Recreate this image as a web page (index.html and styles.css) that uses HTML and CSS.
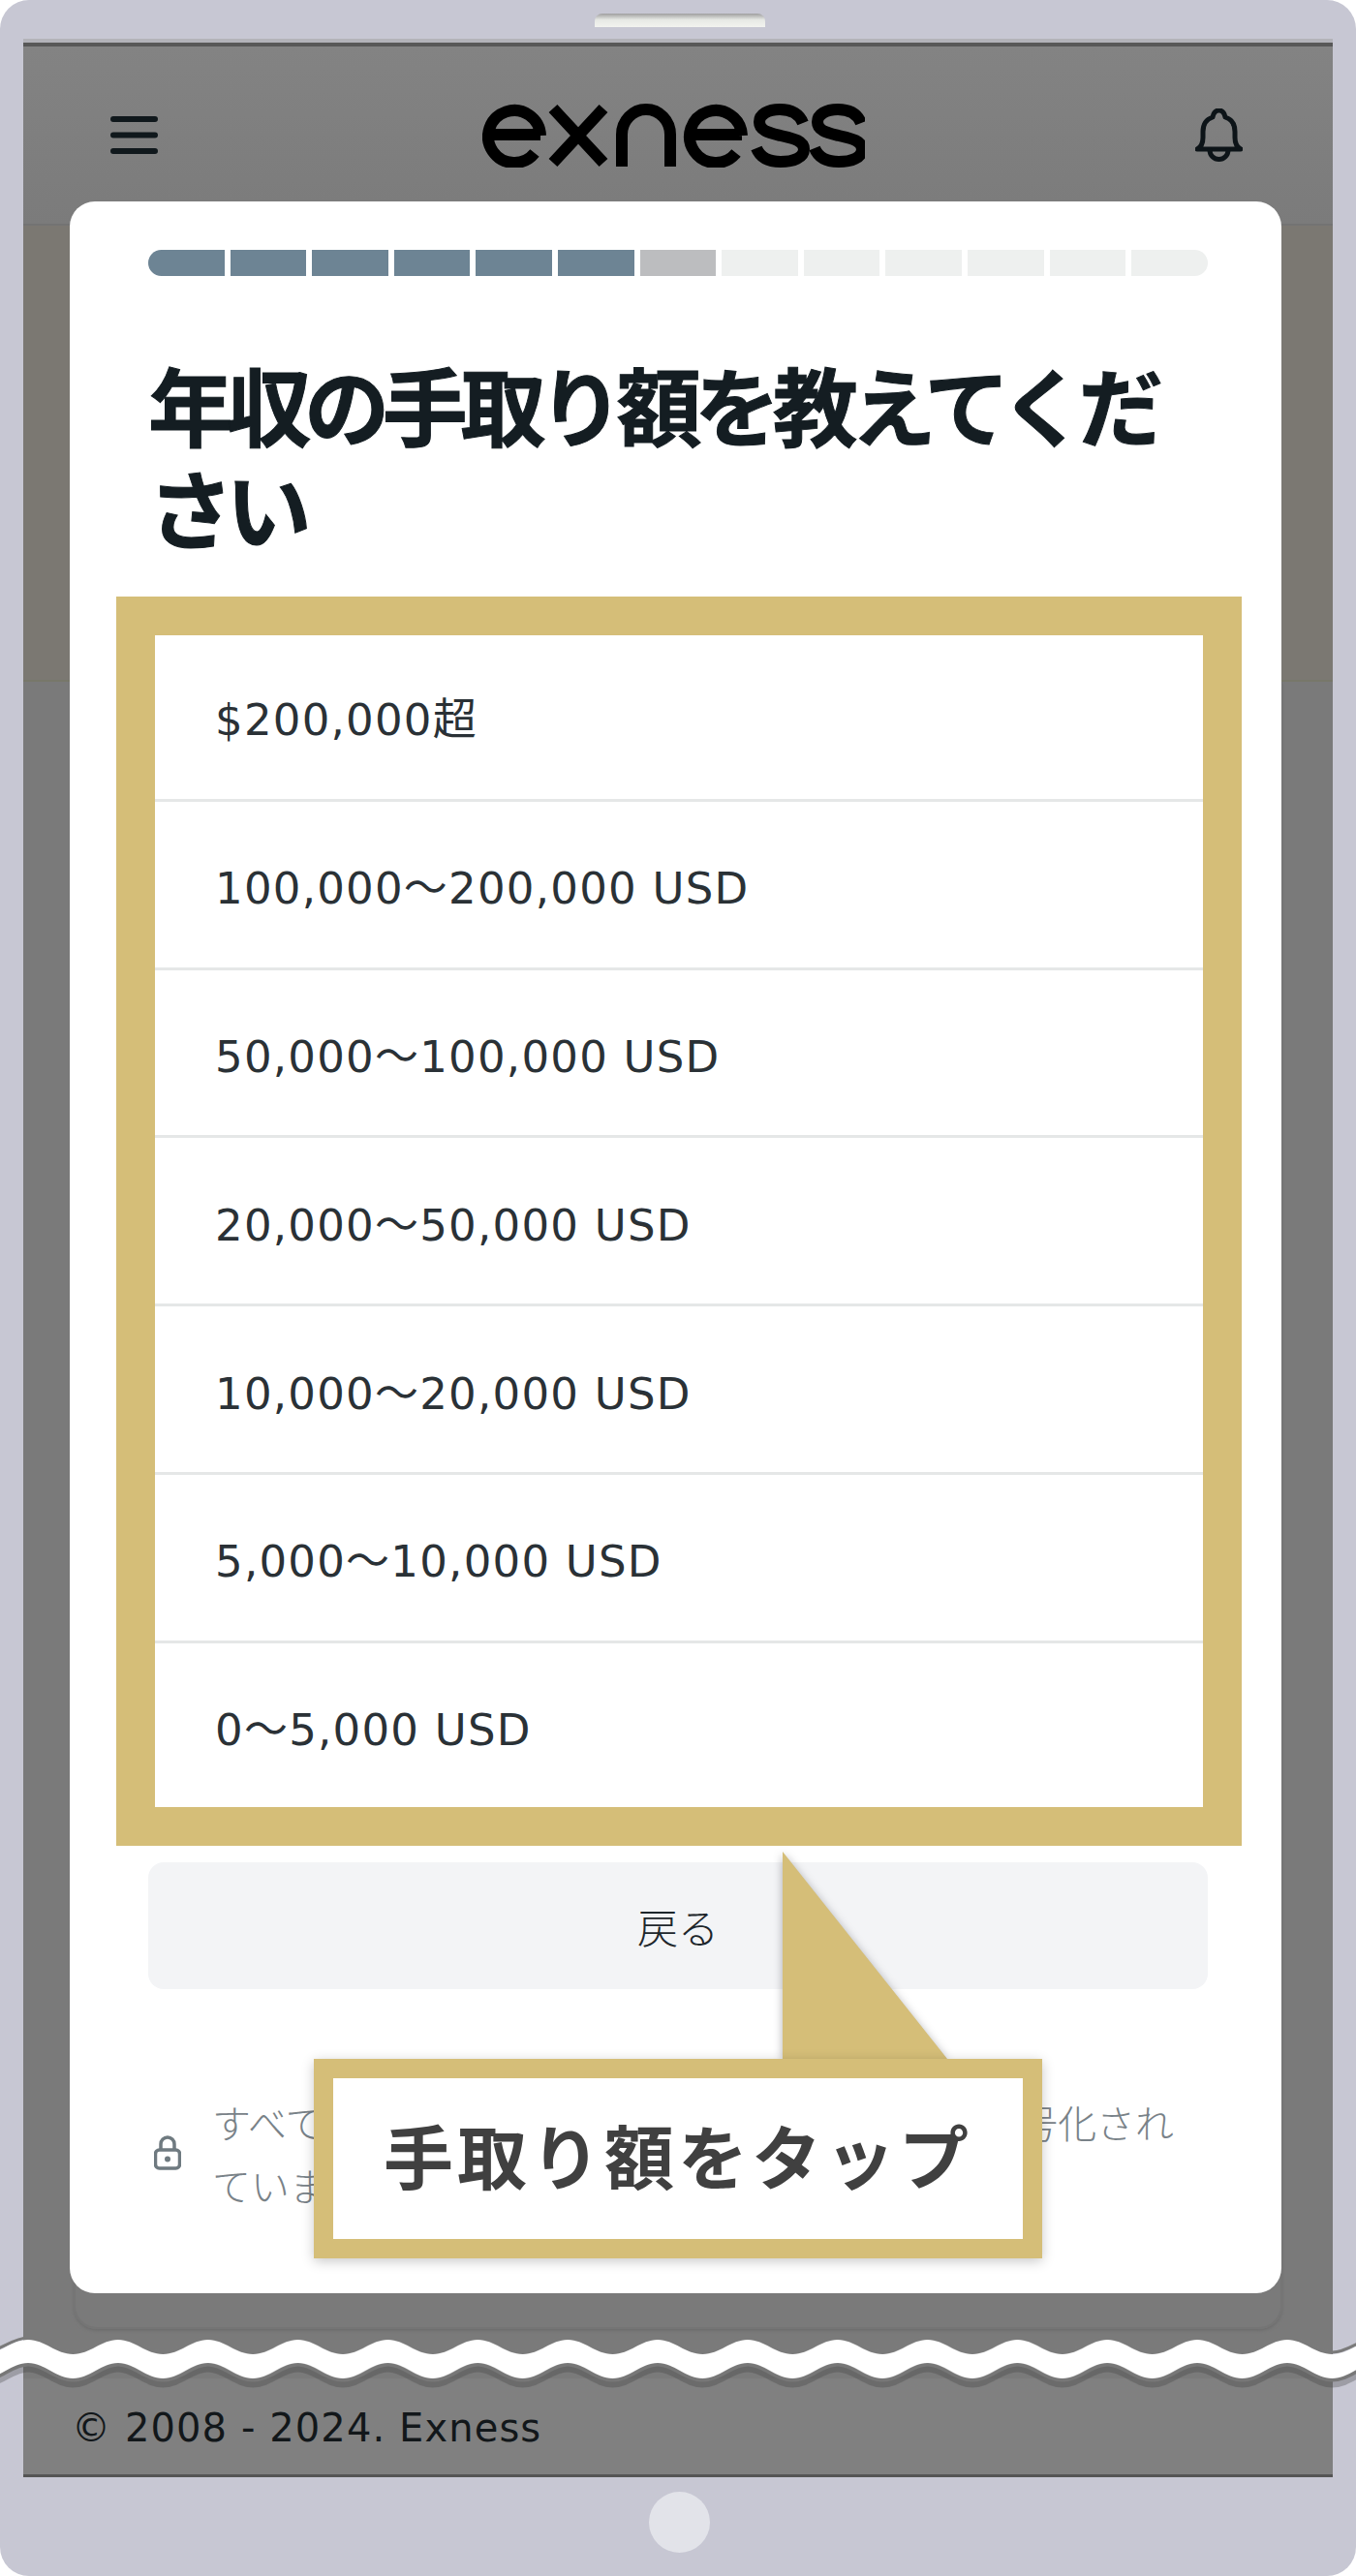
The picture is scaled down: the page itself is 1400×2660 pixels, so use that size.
FILE: index.html
```html
<!DOCTYPE html>
<html lang="ja">
<head>
<meta charset="utf-8">
<title>Exness</title>
<link rel="stylesheet" href="styles.css">
</head>
<body>
<div class="device">
  <div class="speaker"></div>
  <div class="screen">
    <header class="topbar">
      <svg class="menu-icon" viewBox="0 0 49 39" aria-hidden="true"><path d="M3 3h43M3 19.5h43M3 36h43"/></svg>
      <svg class="logo" viewBox="0 0 395 66" aria-label="exness">
        <path d="M6 32H60M60 33A27 27 0 1 0 54 51"/>
        <path d="M73 5L125 61M125 5L73 61"/>
        <path d="M144 65V32A25 26 0 0 1 194 32V65"/>
        <path d="M214 32H268M268 33A27 27 0 1 0 262 51"/>
        <path d="M331 20C327 10 318 6 307 6C295 6 286 11 286 19C286 28 296 30 308 33C321 36 332 38 332 47C332 56 321 60 308 60C296 60 287 56 283 46"/>
        <path d="M391 20C387 10 378 6 367 6C355 6 346 11 346 19C346 28 356 30 368 33C381 36 392 38 392 47C392 56 381 60 368 60C356 60 347 56 343 46"/>
      </svg>
      <svg class="bell-icon" viewBox="0 0 49 56" aria-hidden="true"><path d="M2 42C6 40 8 37 8 30V24C8 16 12 11 18 9C19 4 22 2 24.5 2C27 2 30 4 31 9C37 11 41 16 41 24V30C41 37 43 40 47 42Z"/><path d="M15 43A9.5 9.5 0 0 0 34 43"/></svg>
    </header>
    <div class="hero"></div>
    <div class="backdrop"><div class="behind-card"></div></div>
    <footer class="copyright">© 2008 - 2024. Exness</footer>
  </div>
  <div class="home-button"></div>

  <section class="modal">
    <div class="progress">
      <span class="seg done"></span><span class="seg done"></span><span class="seg done"></span><span class="seg done"></span><span class="seg done"></span><span class="seg done"></span>
      <span class="seg current"></span>
      <span class="seg"></span><span class="seg"></span><span class="seg"></span><span class="seg"></span><span class="seg"></span><span class="seg"></span>
    </div>
    <h1 class="title">年収の手取り額を教えてください</h1>
    <ul class="options">
      <li class="option">$200,000超</li>
      <li class="option">100,000～200,000 USD</li>
      <li class="option">50,000～100,000 USD</li>
      <li class="option">20,000～50,000 USD</li>
      <li class="option">10,000～20,000 USD</li>
      <li class="option">5,000～10,000 USD</li>
      <li class="option">0～5,000 USD</li>
    </ul>
    <button class="back" type="button">戻る</button>
    <div class="secure">
      <svg class="lock-icon" viewBox="0 0 28 36" aria-hidden="true"><path d="M7 15V9A7 7 0 0 1 21 9V15"/><rect x="1.5" y="15" width="25" height="19" rx="4"/><circle class="lock-dot" cx="14" cy="24.5" r="3"/></svg>
      <p class="secure-text">すべてのお客様の個人情報は、安全のために暗号化され<br>ています</p>
    </div>
  </section>

  <div class="highlight"></div>
  <svg class="pointer" viewBox="0 0 190 224" aria-hidden="true"><polygon points="10,2 180,216 10,216"/></svg>
  <div class="callout">手取り額をタップ</div>

  <svg class="wave" width="1400" height="70" aria-hidden="true">
    <defs>
      <pattern id="wave-tile" patternUnits="userSpaceOnUse" x="29" y="0" width="92.86" height="70">
        <path class="wave-shadow" d="M0 34C17 34 29 50 46.43 50S75.86 34 92.86 34"/>
        <path class="wave-edge" d="M0 29C17 29 29 45 46.43 45S75.86 29 92.86 29"/>
        <path class="wave-top" d="M0 3C17 3 29 18 46.43 18S75.86 3 92.86 3"/>
        <path class="wave-fill" d="M0 5C17 5 29 20 46.43 20S75.86 5 92.86 5V29C75.86 29 63.86 45 46.43 45S17 29 0 29Z"/>
      </pattern>
    </defs>
    <rect class="wave-rect" width="1400" height="70"/>
  </svg>
</div>
</body>
</html>
```
FILE: styles.css
```css
* { box-sizing: border-box; }
html, body { margin: 0; padding: 0; }
body { width: 1400px; height: 2660px; overflow: hidden; background: #fff; font-family: "DejaVu Sans", "Noto Sans CJK JP", sans-serif; }

.device { position: relative; width: 1400px; height: 2660px; padding: 40px 24px 102px; background: #c7c7d3; border-radius: 30px; }
.speaker { position: absolute; left: 614px; top: 14px; width: 176px; height: 14px; border-radius: 8px 8px 0 0; background: linear-gradient(#9f9f9f, #e6e8e4 45%, #f2f3ef); }
.home-button { position: absolute; left: 670px; top: 2573px; width: 63px; height: 63px; border-radius: 50%; background: #e2e3e9; }

.screen { display: flex; flex-direction: column; height: 2518px; background: #7a7a7a; border-top: 4px solid #b3b3b9; }
.topbar { display: flex; align-items: center; justify-content: space-between; height: 189px; padding: 0 93px 0 90px; background: linear-gradient(#838383, #7b7b7b); border-top: 4px solid #585858; border-bottom: 2px solid #737373; }
.menu-icon { width: 49px; height: 39px; fill: none; stroke: #10181c; stroke-width: 6; stroke-linecap: round; }
.logo { width: 395px; height: 66px; margin-right: 6px; fill: none; stroke: #000; stroke-width: 12; }
.bell-icon { width: 49px; height: 56px; fill: none; stroke: #0d1418; stroke-width: 5; stroke-linejoin: round; stroke-linecap: round; }
.hero { height: 471px; background: #7b7872; border-bottom: 2px solid #77776a; }
.backdrop { flex: 1; padding: 0 52px 0 52px; }
.behind-card { height: 1701px; border-radius: 0 0 24px 24px; border: 2px solid #757575; border-top: 0; box-shadow: 0 2px 3px #6e6e6e; }
.copyright { height: 102px; padding: 26px 0 0 50px; background: #808080; border-bottom: 3px solid #555; color: #12171a; font-size: 40px; line-height: 50px; letter-spacing: 1.1px; }

.modal { position: absolute; left: 72px; top: 208px; width: 1251px; height: 2160px; padding: 50px 76px 0 81px; background: #fff; border-radius: 26px; }
.progress { display: flex; gap: 6px; height: 27px; border-radius: 14px; overflow: hidden; }
.seg { flex: 1; background: #eef0ef; }
.seg.done { background: #6d8494; }
.seg.current { background: #bcbdbf; }
.title { margin: 78px 0 0; font-family: "Noto Sans CJK JP", sans-serif; font-size: 88px; font-weight: 700; line-height: 106px; letter-spacing: -7.4px; color: #141d22; -webkit-text-stroke: 1px #141d22; }
.options { margin: 79px 0 0; padding: 0; list-style: none; }
.option { display: flex; align-items: center; height: 173.8px; padding: 1px 0 0 69px; border-bottom: 3px solid #e5e7e7; color: #2a3136; font-family: "DejaVu Sans", "Noto Sans CJK JP", sans-serif; font-size: 45px; letter-spacing: 1.25px; }
.option:last-child { border-bottom-color: transparent; }
.back { display: block; width: 100%; height: 131px; margin-top: 52px; border: 0; border-radius: 16px; background: #f3f4f6; color: #1d262b; font-family: "Noto Sans CJK JP", sans-serif; font-size: 42px; font-weight: 300; }
.secure { display: flex; align-items: center; gap: 32px; margin-top: 104px; padding-left: 6px; }
.lock-icon { width: 28px; height: 36px; flex: none; fill: none; stroke: #6f7a80; stroke-width: 3.5; }
.lock-dot { fill: #6f7a80; stroke: none; }
.secure-text { margin: 0; width: 1020px; color: #798288; font-family: "Noto Sans CJK JP", sans-serif; font-size: 39.9px; font-weight: 300; line-height: 65px; }

.highlight { position: absolute; left: 120px; top: 616px; width: 1162px; height: 1290px; border: 40px solid #d5be78; }
.pointer { position: absolute; left: 798px; top: 1910px; width: 190px; height: 224px; fill: #d5be78; filter: drop-shadow(0 2px 5px rgba(30, 30, 40, .35)); }
.callout { position: absolute; left: 324px; top: 2126px; width: 752px; height: 206px; border: 20px solid #d5be78; background: #fff; box-shadow: 0 3px 12px rgba(0, 0, 0, .22); color: #404040; font-family: "Noto Sans CJK JP", sans-serif; font-size: 72px; font-weight: 700; line-height: 156px; letter-spacing: 4px; text-align: center; }

.wave { position: absolute; left: 0; top: 2411px; }
.wave-rect { fill: url(#wave-tile); }
.wave-fill { fill: #fff; }
.wave-edge { fill: none; stroke: #777; stroke-width: 7; }
.wave-shadow { fill: none; stroke: rgba(60, 60, 60, .3); stroke-width: 9; }
.wave-top { fill: none; stroke: #7a7a7a; stroke-width: 3; }
```
